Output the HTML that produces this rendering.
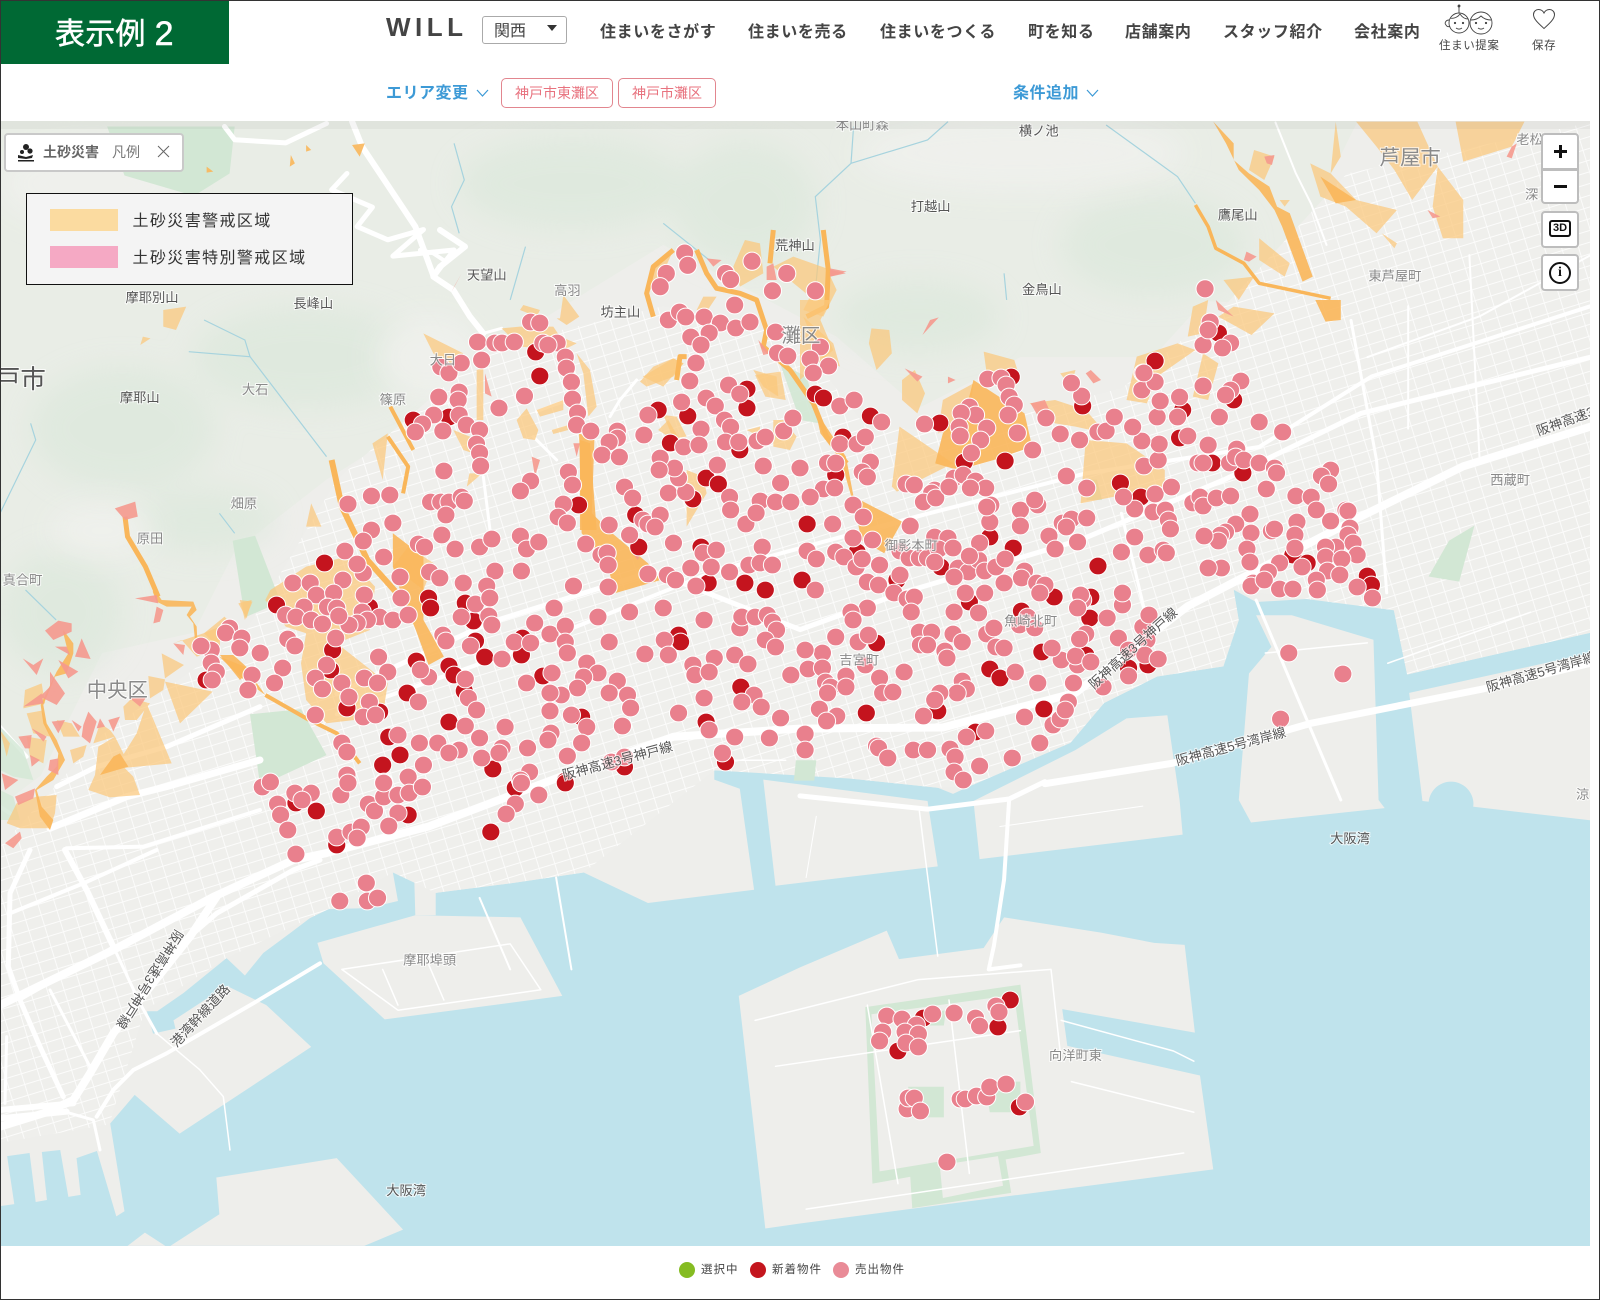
<!DOCTYPE html>
<html lang="ja"><head><meta charset="utf-8"><title>表示例 2</title>
<style>
html,body{margin:0;padding:0;background:#fff}
#w{position:relative;width:1600px;height:1300px;overflow:hidden;background:#fff;font-family:"Liberation Sans","Noto Sans CJK JP",sans-serif}
#w>*{position:absolute}
svg{left:0;top:0}
.nv{top:20.5px;font-size:16px;font-weight:700;color:#444;letter-spacing:.62px;line-height:24px;white-space:nowrap}
.bl{top:81.5px;font-size:16px;font-weight:700;color:#3d9ad6;letter-spacing:.5px;line-height:24px;white-space:nowrap}
.pl{top:78px;height:28px;border:1px solid #e2868f;border-radius:5px;font-size:14px;color:#e8737f;line-height:29px;text-align:center;white-space:nowrap;box-sizing:content-box}
.ctl{background:#fff;border:2px solid #bdbdbd;border-radius:4px;box-sizing:border-box;left:1541px;width:38px}
.sm{font-size:11.500px;color:#444;letter-spacing:.6px;white-space:nowrap;line-height:14px}
.lg{font-size:11.500px;color:#444;letter-spacing:1px;top:1263px;line-height:14px;white-space:nowrap}
.dt{width:16px;height:16px;border-radius:50%;top:1262px}
.h{fill:#fbc77c;opacity:.72}.o{fill:#f9b65a;opacity:.9}.k{fill:#f5998e;opacity:.9}
.ln{fill:none;stroke:#f9b65a;vector-effect:non-scaling-stroke;stroke-linejoin:round}
.rv{fill:none;stroke:#a6d3de;stroke-width:1.2;vector-effect:non-scaling-stroke}
.g{fill:#d2e7d4}
.lnd{fill:#eeeeeb}
.rd{fill:none;stroke:#fff;stroke-linejoin:round;stroke-linecap:round}
.rd path{vector-effect:non-scaling-stroke}
.p circle{r:8.9px;fill:#e9808d;stroke:#fff;stroke-width:1}
.r circle{r:8.9px;fill:#c4141e;stroke:#fff;stroke-width:1}
text{font-family:"Liberation Sans","Noto Sans CJK JP",sans-serif;text-anchor:middle;paint-order:stroke;stroke:#fff;stroke-width:2px;stroke-opacity:.75;font-size:13px;fill:#8a8a8a}
text.d{fill:#555}
</style></head><body>
<div id="w">
<svg width="1600" height="1300" viewBox="0 0 1600 1300">
<defs>
<clipPath id="cp"><rect x="1" y="121" width="1589" height="1125"/></clipPath>
<pattern id="st" width="16" height="11" patternUnits="userSpaceOnUse" patternTransform="rotate(-17)"><path d="M0 .5H16M.5 0V11" stroke="#fff" stroke-width=".9" fill="none" opacity=".8"/></pattern>
<filter id="bl" x="-30%" y="-30%" width="160%" height="160%"><feGaussianBlur stdDeviation="14"/></filter>
</defs>
<g clip-path="url(#cp)">
<rect x="0" y="121" width="1600" height="1130" fill="#bfe3ec"/>
<g transform="scale(1.0204)">
<path class="lnd" d="M0 1182L14 1180 7 1133 29 1130 35 1178 46 1176 41 1129 59 1127 67 1173 79 1171 75 1135 95 1128 114 1192 122 1187 108 1101 132 1073 176 1111 305 1026 261 985 222 966 170 1000 172 1008 150 1013 144 991 154 991 180 973 222 939 240 956 258 934 285 914 310 895 322 891 360 890 390 883 385 855 400 852 406 862 407 897 427 897 427 875 505 865 572 855 635 885 739 872 725 773 700 764 700 755 784 754 834 763 919 772 934 778 949 771 1049 728 1082 689 1134 663 1199 653 1201 621 1214 608 1209 578 1231 590 1314 585 1334 593 1366 598 1379 661 1559 620 1559 100 0 100Z"/>
<path class="lnd" d="M311 924L407 897 510 899 551 976 377 999 317 944ZM212 1154L330 1135 395 1205 357 1221 167 1221 215 1190ZM125 1221L142 1208 162 1221ZM748 764L909 785 919 849 760 868ZM954 785L1054 735 1104 704 1144 701 1156 784 1159 818 960 842ZM1224 660L1246 634 1231 603 1266 603 1346 627 1351 784 1357 792 1226 806 1214 784ZM1381 679L1559 640 1559 804 1439 790 1394 785Z"/>
<path class="lnd" d="M724 976L784 948 869 912 881 940 964 929 984 899 1079 914 1131 924 1161 926 1171 1012 1041 989 1046 1025 1176 1054 1189 1146 784 1199 750 1204Z"/>
<circle cx="1422" cy="788" r="22" fill="#bfe3ec"/>
<!-- hills -->
<path fill="#e9ede6" d="M0 100H1340L1300 180 1290 300 1180 295 1130 350 1000 350 900 400 820 330 650 240 520 320 400 420 320 470 230 540 190 620 100 640 40 760 0 790Z"/>
<g filter="url(#bl)" fill="#dce8dc" opacity=".7">
<ellipse cx="120" cy="420" rx="90" ry="60"/><ellipse cx="300" cy="350" rx="110" ry="50"/><ellipse cx="60" cy="600" rx="60" ry="60"/><ellipse cx="560" cy="180" rx="110" ry="45"/><ellipse cx="730" cy="200" rx="70" ry="60"/><ellipse cx="900" cy="310" rx="80" ry="35"/><ellipse cx="1130" cy="240" rx="90" ry="50"/><ellipse cx="200" cy="510" rx="70" ry="30"/>
</g>
<g filter="url(#bl)" fill="#f0f1ed" opacity=".9">
<ellipse cx="90" cy="180" rx="90" ry="40"/><ellipse cx="1000" cy="150" rx="160" ry="35"/><ellipse cx="420" cy="350" rx="50" ry="40"/><ellipse cx="100" cy="520" rx="50" ry="25"/>
</g>
<!-- urban street texture -->
<path fill="#efefec" d="M0 830L100 720 240 620 330 470 480 340 650 300 780 330 850 420 950 420 1100 380 1200 300 1320 170 1559 120V620L1379 661 1366 598 1209 578 1214 608 1199 653 1134 663 1082 689 1049 728 949 771 919 772 834 763 700 755 572 855 505 865 427 875 385 855 322 891 222 939 142 990 107 1102 0 1120Z"/>
<path fill="url(#st)" d="M0 830L100 720 240 620 330 470 480 340 650 300 780 330 850 420 950 420 1100 380 1200 300 1320 170 1559 120V620L1379 661 1366 598 1209 578 1214 608 1199 653 1134 663 1082 689 1049 728 949 771 919 772 834 763 700 755 572 855 505 865 427 875 385 855 322 891 222 939 142 990 107 1102 0 1120Z"/>
<!-- parks -->
<path class="g" d="M228 530L250 525 275 590 240 605ZM245 700L295 695 320 740 255 770ZM105 124H230L225 170 190 192 122 172ZM1062 470H1075L1080 490 1065 490ZM1420 530L1445 515 1430 570 1400 565ZM780 745H800L798 765H778ZM848 987L1000 965 1020 1130 855 1160ZM891 1136L984 1127 991 1169 894 1184Z"/>
<path fill="#eeeeeb" d="M854 994L994 975 1013 1123 862 1148ZM921 1142L978 1133 983 1162 924 1174Z"/>
<path class="g" d="M895 1005H925L927 990 896 995ZM890 1065H925V1095H893ZM965 1060H1000V1090H970Z"/>
<!-- roads -->
<g class="rd">
<path stroke-width="8" d="M0 985L111 931 209 879 287 843 320 836 420 810 550 761 660 722 784 714 924 713 1054 679 1164 594 1334 506 1434 457 1559 418"/>
<path stroke-width="7" d="M1024 768L1149 748 1284 709 1454 675 1559 650"/>
<path stroke-width="5" d="M784 780L909 793 989 783 1024 766"/>
<path stroke-width="4" d="M989 783L984 862 974 927 969 950 1000 946"/>
<path stroke-width="1.5" d="M901 795L919 937"/>
<path stroke-width="5" d="M330 680L480 610 640 560 784 617 884 581 1059 529 1200 470 1334 405 1559 350"/>
<path stroke-width="4" d="M330 700L500 640 700 560 899 506 1064 464 1234 438 1344 369 1559 300"/>
<path stroke-width="3" d="M1324 314L1349 451 1359 581M1099 503L1124 608M1231 588L1314 784"/>
<path stroke-width="2" d="M470 880L500 950M545 860L560 950"/>
<path stroke-width="1.5" d="M335 950L500 925 530 970 390 990ZM375 950L390 985M420 945L435 980M740 1000L900 960 1030 950 1040 1040M760 1045L1000 1010M850 985L880 1160M930 980L950 1150M1040 1000L1150 1030 1170 1040M1050 1060L1170 1090M790 1185L1160 1130M720 745L770 745M1240 640L1340 630M1360 650L1500 600"/>
<path stroke-width="1" d="M800 800L790 860M980 810L1120 790M1240 720L1330 700"/>
<path stroke-width="5" d="M220 124L230 137 280 140 320 121M340 170L325 186 365 203 350 222 380 235 415 225 385 251 445 245 425 271"/>
<path stroke-width="6" d="M345 119L355 144 407 222 425 271"/>
<path stroke-width="2" d="M1250 120L1270 170 1285 200 1300 240M1340 350L1450 310 1559 250M1380 300V420M1440 250L1450 450"/>
</g>
</g>
<!-- precise west road network (zoom-3 coordinates) -->
<g transform="translate(0,850) scale(.3333)" class="rd">
<path stroke-width="6" d="M195 0L260 120 340 290"/>
<path stroke-width="3" d="M340 290L420 460 470 550"/>
<path stroke-width="1.5" d="M470 550L600 660 670 740 690 900"/>
<path stroke-width="5" d="M90 0L30 130 25 350 60 450 120 590 190 740"/>
<path stroke-width="4" d="M30 190L250 100 470 0"/>
<path stroke-width="8" d="M0 830L130 790 220 750 270 670 340 550 570 260 650 140"/>
<path stroke-width="6" d="M0 780L220 760M0 805L200 785"/>
<path stroke-width="5" d="M580 250L650 190 880 60 960 30"/>
<path stroke-width="4" d="M290 800L340 720 400 660 500 610 760 460 960 340"/>
<path stroke-width="3" d="M210 790L280 810 300 900M60 450L340 290M150 420L270 650M20 560L15 760"/>
</g>
<g transform="translate(0,590) scale(.3333)" class="rd">
<path stroke-width="7" d="M150 715L380 620 500 590 780 510"/>
<path stroke-width="5" d="M170 590L290 530 500 470 780 350"/>
<path stroke-width="4" d="M0 410L80 500M0 650L30 670M200 775L430 770 780 660"/>
</g>
<!-- rivers -->
<g transform="translate(800,0) scale(.5102,.3333)"><path class="rv" d="M105 380L100 490 30 590 40 720 28 900M100 490L250 420 290 365M600 375L740 530 775 610M400 820L405 900"/></g>
<g transform="translate(0,0) scale(.5102,.3333)"><path class="rv" d="M890 430L910 540 885 620 900 700M1300 670L1390 780M1030 740L1000 900"/></g>
<g transform="translate(0,300) scale(.5102,.3333)"><path class="rv" d="M400 60L480 120 490 170 370 155M490 170L640 470M60 370L70 420 0 640M430 640L460 700M50 870L110 960"/></g>
<!-- hazard zones Z4 -->
<g transform="translate(0,300) scale(.5102,.3333)">
<path class="h" d="M530 870L600 800 680 770 735 860 725 990 660 1030 760 1150 750 1250 640 1270 600 1200 590 1090 600 1000 560 980 520 900ZM1260 230L1320 175 1340 190 1300 260ZM320 30L365 20 345 90 320 80ZM730 430L760 400 750 540ZM610 610L630 680 600 680ZM800 740L850 790 830 870 770 800ZM470 900L495 905 480 960ZM400 1000L440 950 470 1000 420 1030ZM1480 225L1530 215 1540 300 1500 290ZM1310 360L1340 440 1290 390ZM920 520L945 520 915 560ZM280 110L295 115 275 135Z"/>
<path class="o" d="M1135 400L1165 420 1160 640 1200 700 1270 790 1295 840 1205 880 1190 790 1140 700ZM430 1070L480 1100 520 1185 470 1130ZM770 700L830 770 830 960 870 1070 840 1095 815 990 790 900 770 800Z"/>
<path class="ln" stroke-width="6" d="M650 480L670 620 720 780 790 900"/>
<path class="ln" stroke-width="5" d="M245 650L250 710 285 800 310 890"/>
<path class="ln" stroke-width="4" d="M520 1185L600 1255 660 1300 705 1390M760 410L800 500 790 580M765 320L810 450"/>
<path class="k" d="M225 625L265 605 270 650 245 660ZM1240 760L1265 730 1250 780Z"/>
</g>
<!-- hazard zones west (zoom-1 coords) -->
<g transform="translate(0,590) scale(.3333)">
<path class="g" d="M0 410L70 480 100 570 40 560 0 540ZM0 600L40 620 60 690 0 690Z" opacity=".8"/>
<path class="h" d="M485 190L552 225 495 265ZM445 258L495 268 490 300 450 325ZM495 275L638 305 540 400ZM370 350L395 325 450 340 410 390 375 390ZM440 340L515 520 360 535 360 510 410 430ZM345 440L390 530 285 555 295 470ZM285 555L370 530 400 560 420 615 330 622 265 600ZM210 480L260 465 250 500 220 520ZM80 370L125 362 150 440 100 430ZM50 640L110 620 170 615 165 670 150 715 60 715 20 700ZM75 300L125 280 135 340 70 355ZM610 130L660 110 660 180 590 200 545 150 520 160ZM715 40L755 30 740 85ZM0 420L30 460 20 500ZM80 440L140 450 130 520 90 500ZM300 400L330 420 345 440 280 460ZM170 390L215 400 240 440 190 440Z"/>
<path class="o" d="M465 0L485 30 580 35 590 60 570 80 590 110 592 150 585 150 580 100 560 75 575 50 500 50 470 35 458 5ZM190 120L220 160 220 190 200 250 165 260 130 345 140 400 170 450 195 510 160 570 110 600 125 650 160 690 150 720 120 680 105 600 140 560 170 530 175 490 130 400 122 345 170 245 205 190 190 130ZM660 195L700 195 750 240 720 270ZM360 490L385 530 300 555 340 500Z"/>
<path class="k" d="M135 122L175 92 215 100 215 125 160 150ZM165 170L200 170 210 195ZM245 145L272 207 225 200ZM68 205L100 225 130 205 110 255ZM175 210L235 245 205 265ZM150 245L195 310 170 345 120 320 150 290ZM70 350L125 310 130 340ZM405 25L470 15 475 40ZM470 50L490 60 480 95 460 100ZM520 160L555 165 550 195ZM390 325L440 320 420 350ZM265 365L290 395 270 460 245 440 250 405ZM300 385L315 410 290 415ZM325 390L360 380 340 425ZM215 390L245 410 235 425ZM155 395L195 390 175 430ZM55 440L95 435 90 475 75 475ZM95 415L140 440 130 455ZM150 510L175 505 175 555 145 540ZM5 550L55 570 15 600ZM45 620L105 595 100 625 55 645ZM15 760L60 725 65 745 40 775ZM90 495L120 510 95 530Z"/>
</g>
<!-- hazard zones centre-north (zoom-2 coords) -->
<g transform="translate(420,230) scale(.3333)">
<g class="rd"><path stroke-width="6" d="M60 0L135 50 60 110 40 140 100 180 150 260 190 310"/><path stroke-width="4" d="M0 60L40 70 70 90"/><path stroke-width="3" d="M190 310L245 295M340 620L410 690M190 740L210 900M350 545L440 510M650 450L600 510 570 560"/></g>
<path class="g" d="M1080 400L1160 440 1200 580 1140 570Z" opacity=".9"/>
<path class="h" d="M300 240L310 225 360 240 350 260ZM420 265L430 195 478 260 440 285 410 265ZM245 295L300 290 400 290 420 320 470 340 430 360 300 350ZM10 310L130 370 90 410 40 370ZM170 420L190 415 190 570 170 570ZM350 540L430 510 430 540 360 560ZM290 570L320 535 355 600 345 630 310 625ZM395 600L445 585 445 600 400 612ZM470 370L510 420 530 530 505 560 490 430ZM975 30L1020 40 1030 130 960 170 940 110ZM1120 80L1220 115 1250 180 1210 260 1150 240 1170 200 1060 110ZM700 410L760 385 790 400 760 440 680 470 660 455ZM730 555L770 560 800 620 760 625ZM1000 420L1070 440 1075 500 1030 470ZM1060 570L1090 570 1130 620 1110 660 1060 650ZM800 720L850 740 860 790 800 890ZM1150 260L1240 340 1260 410 1200 380ZM850 200L890 200 860 245 830 240ZM980 600L1020 590 1020 620ZM700 110L760 60 720 150 690 180ZM100 600L150 620 190 680 130 660Z"/>
<path class="o" d="M480 630L510 640 530 900 480 900Z"/>
<path class="ln" stroke-width="5" d="M700 260L680 190 700 110 760 60M830 60L860 130 890 175 960 190 1010 210 1040 300 1030 350 1110 420 1180 520 1220 620 1280 700M1210 0L1225 120 1220 230 1160 260M1060 0L1050 100M770 450L780 380 800 380"/>
<path class="k" d="M95 185L125 130 105 165ZM860 85L905 90 880 110ZM1230 115L1280 125 1230 140ZM1040 110L1060 100 1070 150 1040 150ZM1015 330L1050 370 1030 375ZM195 430L215 500 195 490ZM460 640L480 640 470 680ZM335 680L360 690 345 740Z"/>
</g>
<!-- hazard zones Z5 -->
<g transform="translate(800,300) scale(.5102,.3333)">
<path class="h" d="M0 0H60L40 60 65 150 0 240ZM195 380L300 490 190 575 180 560ZM560 420L640 430 715 510 715 560 550 610ZM850 20L930 40 885 105 820 50ZM660 170L740 130 775 150 700 230 680 310 640 300ZM140 85L175 90 180 160 150 210 135 130ZM200 240L225 210 245 280 230 340 200 300ZM360 155L420 180 430 230 365 210ZM450 310L500 300 560 330 600 400 540 380 500 370ZM510 220L540 210 530 260ZM280 300L340 250 330 380 270 400ZM770 20L800 0 790 100 760 110ZM790 160L820 190 800 300 770 290Z"/>
<path class="o" d="M340 240L440 340 455 440 380 480 310 510 265 490 280 400 330 300ZM1010 0H1060V60L1030 65ZM40 400L30 330 90 470 105 590 200 665 165 760 120 720 110 640 80 480Z"/>
<path class="k" d="M255 60L272 52 240 105ZM570 210L590 240 575 250 560 220ZM452 310L480 300 490 335 465 345ZM815 0L850 50 820 30ZM205 205L240 230 230 245ZM290 230L305 240 290 250Z"/>
</g>
<!-- hazard zones Z2 -->
<g transform="translate(800,0) scale(.5102,.3333)">
<path class="h" d="M1050 365L1060 470 1040 520 1090 600 1070 620 1020 590 1000 490 1040 520ZM1090 365H1210L1250 500 1300 600 1300 715 1260 715 1240 620 1250 500 1200 600 1165 510 1130 440ZM1285 365H1420L1395 440 1300 485ZM1090 600L1170 630 1130 700 1070 620ZM900 715L960 790 950 830 900 780ZM890 450L930 470 910 540 880 510ZM830 840L890 830 860 900ZM1140 700L1170 730 1165 745ZM940 600L960 600 950 620Z"/>
<path class="o" d="M810 365L850 430 850 480 880 520 920 560 935 620 960 640 1005 830 985 845 945 680 930 630 900 570 860 510 835 430ZM1020 530L1090 600 1050 610Z"/>
<path class="ln" stroke-width="3.5" d="M775 615L800 680 815 745 870 790 900 850 1040 895"/>
<path class="k" d="M910 470L930 465 925 495 915 490ZM875 755L895 770 880 785 870 780ZM1230 630L1255 650 1240 655ZM1395 440L1405 430 1395 475 1385 470ZM60 810L90 820 60 830Z"/>
</g>
<g transform="translate(0,0) scale(.5102,.3333)">
<path class="o" d="M690 435L715 430 705 470ZM570 465L578 490 568 500ZM615 470L625 500ZM405 500L418 515 405 518ZM600 435L610 450 600 455Z"/>
</g>
<!-- dots -->
<g transform="translate(0,300) scale(1.0204,1)" class="r"><circle cx=529 cy=76 /><circle cx=525 cy=52 /><circle cx=405 cy=120 /><circle cx=440 cy=117 /><circle cx=645 cy=110 /><circle cx=674 cy=116 /><circle cx=732 cy=108 /><circle cx=732 cy=89 /><circle cx=657 cy=143 /><circle cx=725 cy=150 /><circle cx=692 cy=178 /><circle cx=704 cy=184 /><circle cx=679 cy=199 /><circle cx=567 cy=205 /><circle cx=623 cy=215 /><circle cx=626 cy=247 /><circle cx=687 cy=247 /><circle cx=318 cy=263 /><circle cx=694 cy=283 /><circle cx=730 cy=283 /><circle cx=750 cy=290 /><circle cx=271 cy=305 /><circle cx=420 cy=298 /><circle cx=422 cy=308 /><circle cx=456 cy=303 /><circle cx=464 cy=321 /><circle cx=362 cy=307 /><circle cx=665 cy=335 /><circle cx=667 cy=342 /><circle cx=466 cy=341 /><circle cx=512 cy=338 /><circle cx=511 cy=355 /><circle cx=475 cy=357 /><circle cx=326 cy=350 /><circle cx=408 cy=361 /><circle cx=440 cy=366 /><circle cx=445 cy=375 /><circle cx=324 cy=370 /><circle cx=202 cy=380 /><circle cx=532 cy=376 /><circle cx=399 cy=393 /><circle cx=455 cy=391 /><circle cx=340 cy=408 /><circle cx=372 cy=412 /><circle cx=440 cy=422 /><circle cx=726 cy=387 /><circle cx=692 cy=422 /><circle cx=381 cy=437 /><circle cx=392 cy=455 /><circle cx=375 cy=465 /><circle cx=483 cy=469 /><circle cx=570 cy=417 /><circle cx=711 cy=462 /><circle cx=554 cy=481 /><circle cx=505 cy=488 /><circle cx=612 cy=467 /></g>
<g transform="translate(800,300) scale(1.0204,1)" class="r"><circle cx=15 cy=94 /><circle cx=23 cy=98 /><circle cx=69 cy=116 /><circle cx=137 cy=123 /><circle cx=207 cy=77 /><circle cx=348 cy=61 /><circle cx=336 cy=73 /><circle cx=277 cy=106 /><circle cx=410 cy=33 /><circle cx=425 cy=100 /><circle cx=375 cy=110 /><circle cx=372 cy=138 /><circle cx=42 cy=137 /><circle cx=161 cy=162 /><circle cx=201 cy=161 /><circle cx=314 cy=183 /><circle cx=334 cy=197 /><circle cx=404 cy=163 /><circle cx=434 cy=173 /><circle cx=35 cy=175 /><circle cx=7 cy=224 /><circle cx=186 cy=237 /><circle cx=209 cy=248 /><circle cx=56 cy=252 /><circle cx=2 cy=280 /><circle cx=95 cy=280 /><circle cx=138 cy=267 /><circle cx=292 cy=266 /><circle cx=483 cy=255 /><circle cx=497 cy=263 /><circle cx=556 cy=276 /><circle cx=560 cy=285 /><circle cx=249 cy=297 /><circle cx=285 cy=297 /><circle cx=166 cy=302 /><circle cx=217 cy=311 /><circle cx=284 cy=318 /><circle cx=75 cy=343 /><circle cx=237 cy=352 /><circle cx=280 cy=355 /><circle cx=186 cy=369 /><circle cx=196 cy=378 /><circle cx=322 cy=368 /><circle cx=341 cy=365 /><circle cx=65 cy=413 /><circle cx=135 cy=411 /><circle cx=239 cy=409 /><circle cx=172 cy=432 /></g>
<g transform="translate(800,780) scale(1.0204,1)" class="r"><circle cx=206 cy=220 /><circle cx=121 cy=238 /><circle cx=194 cy=247 /><circle cx=96 cy=271 /><circle cx=215 cy=327 /></g>
<g transform="translate(0,780) scale(1.0204,1)" class="r"><circle cx=310 cy=31 /><circle cx=400 cy=35 /><circle cx=330 cy=65 /><circle cx=481 cy=52 /><circle cx=505 cy=8 /><circle cx=554 cy=3 /><circle cx=290 cy=23 /></g>
<g transform="scale(1.0204)" class="p"><circle cx=671 cy=248 /><circle cx=674 cy=260 /><circle cx=653 cy=268 /><circle cx=647 cy=281 /><circle cx=711 cy=268 /><circle cx=716 cy=274 /><circle cx=737 cy=256 /><circle cx=771 cy=268 /><circle cx=757 cy=285 /><circle cx=799 cy=285 /><circle cx=1181 cy=283 /></g>
<g transform="translate(0,300) scale(1.0204,1)" class="p"><circle cx=468 cy=42 /><circle cx=485 cy=43 /><circle cx=492 cy=43 /><circle cx=504 cy=42 /><circle cx=520 cy=22 /><circle cx=529 cy=23 /><circle cx=532 cy=43 /><circle cx=546 cy=43 /><circle cx=537 cy=45 /><circle cx=554 cy=57 /><circle cx=555 cy=68 /><circle cx=560 cy=82 /><circle cx=561 cy=99 /><circle cx=566 cy=113 /><circle cx=565 cy=125 /><circle cx=579 cy=131 /><circle cx=432 cy=67 /><circle cx=440 cy=73 /><circle cx=452 cy=63 /><circle cx=472 cy=60 /><circle cx=430 cy=97 /><circle cx=450 cy=92 /><circle cx=449 cy=100 /><circle cx=425 cy=115 /><circle cx=414 cy=124 /><circle cx=407 cy=132 /><circle cx=434 cy=131 /><circle cx=450 cy=115 /><circle cx=457 cy=125 /><circle cx=470 cy=130 /><circle cx=467 cy=144 /><circle cx=470 cy=153 /><circle cx=471 cy=166 /><circle cx=489 cy=108 /><circle cx=514 cy=96 /><circle cx=435 cy=171 /><circle cx=557 cy=172 /><circle cx=561 cy=185 /><circle cx=520 cy=181 /><circle cx=510 cy=191 /><circle cx=422 cy=202 /><circle cx=432 cy=202 /><circle cx=440 cy=202 /><circle cx=452 cy=197 /><circle cx=455 cy=201 /><circle cx=437 cy=215 /><circle cx=341 cy=204 /><circle cx=364 cy=196 /><circle cx=382 cy=195 /><circle cx=385 cy=223 /><circle cx=364 cy=230 /><circle cx=356 cy=241 /><circle cx=338 cy=251 /><circle cx=376 cy=257 /><circle cx=410 cy=244 /><circle cx=416 cy=247 /><circle cx=433 cy=235 /><circle cx=446 cy=249 /><circle cx=470 cy=247 /><circle cx=482 cy=239 /><circle cx=510 cy=236 /><circle cx=516 cy=249 /><circle cx=528 cy=242 /><circle cx=552 cy=204 /><circle cx=547 cy=217 /><circle cx=556 cy=223 /><circle cx=597 cy=225 /><circle cx=574 cy=244 /><circle cx=589 cy=255 /><circle cx=595 cy=253 /><circle cx=596 cy=265 /><circle cx=617 cy=235 /><circle cx=630 cy=220 /><circle cx=635 cy=224 /><circle cx=647 cy=215 /><circle cx=642 cy=227 /><circle cx=612 cy=187 /><circle cx=620 cy=198 /><circle cx=655 cy=193 /><circle cx=672 cy=192 /><circle cx=665 cy=178 /><circle cx=661 cy=168 /><circle cx=647 cy=158 /><circle cx=646 cy=170 /><circle cx=703 cy=165 /><circle cx=748 cy=166 /><circle cx=765 cy=183 /><circle cx=715 cy=197 /><circle cx=745 cy=201 /><circle cx=760 cy=202 /><circle cx=775 cy=202 /><circle cx=716 cy=210 /><circle cx=731 cy=224 /><circle cx=741 cy=213 /><circle cx=660 cy=243 /><circle cx=689 cy=253 /><circle cx=702 cy=250 /><circle cx=747 cy=247 /><circle cx=677 cy=268 /><circle cx=697 cy=267 /><circle cx=715 cy=272 /><circle cx=734 cy=265 /><circle cx=745 cy=263 /><circle cx=757 cy=265 /><circle cx=682 cy=286 /><circle cx=654 cy=275 /><circle cx=662 cy=280 /><circle cx=635 cy=274 /><circle cx=596 cy=287 /><circle cx=562 cy=286 /><circle cx=511 cy=271 /><circle cx=485 cy=271 /><circle cx=454 cy=283 /><circle cx=477 cy=286 /><circle cx=392 cy=277 /><circle cx=421 cy=272 /><circle cx=431 cy=278 /><circle cx=356 cy=273 /><circle cx=350 cy=264 /><circle cx=336 cy=280 /><circle cx=357 cy=295 /><circle cx=393 cy=298 /><circle cx=372 cy=317 /><circle cx=385 cy=320 /><circle cx=400 cy=315 /><circle cx=355 cy=312 /><circle cx=360 cy=320 /><circle cx=350 cy=323 /><circle cx=342 cy=325 /><circle cx=287 cy=283 /><circle cx=304 cy=283 /><circle cx=310 cy=295 /><circle cx=327 cy=293 /><circle cx=298 cy=307 /><circle cx=321 cy=307 /><circle cx=330 cy=308 /><circle cx=280 cy=315 /><circle cx=290 cy=317 /><circle cx=305 cy=320 /><circle cx=316 cy=324 /><circle cx=332 cy=316 /><circle cx=225 cy=328 /><circle cx=221 cy=333 /><circle cx=237 cy=338 /><circle cx=235 cy=348 /><circle cx=255 cy=353 /><circle cx=207 cy=350 /><circle cx=197 cy=346 /><circle cx=207 cy=363 /><circle cx=212 cy=372 /><circle cx=208 cy=380 /><circle cx=277 cy=368 /><circle cx=282 cy=339 /><circle cx=289 cy=346 /><circle cx=329 cy=338 /><circle cx=371 cy=357 /><circle cx=380 cy=372 /><circle cx=320 cy=365 /><circle cx=309 cy=378 /><circle cx=316 cy=389 /><circle cx=335 cy=383 /><circle cx=342 cy=397 /><circle cx=357 cy=378 /><circle cx=370 cy=383 /><circle cx=362 cy=402 /><circle cx=356 cy=417 /><circle cx=368 cy=415 /><circle cx=309 cy=415 /><circle cx=269 cy=383 /><circle cx=247 cy=375 /><circle cx=243 cy=390 /><circle cx=434 cy=335 /><circle cx=437 cy=341 /><circle cx=461 cy=346 /><circle cx=492 cy=359 /><circle cx=504 cy=342 /><circle cx=520 cy=343 /><circle cx=539 cy=334 /><circle cx=554 cy=326 /><circle cx=554 cy=342 /><circle cx=556 cy=353 /><circle cx=543 cy=308 /><circle cx=524 cy=323 /><circle cx=452 cy=317 /><circle cx=479 cy=316 /><circle cx=482 cy=325 /><circle cx=466 cy=304 /><circle cx=480 cy=298 /><circle cx=586 cy=317 /><circle cx=617 cy=312 /><circle cx=650 cy=308 /><circle cx=690 cy=320 /><circle cx=597 cy=342 /><circle cx=651 cy=340 /><circle cx=632 cy=354 /><circle cx=655 cy=355 /><circle cx=575 cy=363 /><circle cx=586 cy=373 /><circle cx=572 cy=377 /><circle cx=566 cy=388 /><circle cx=541 cy=373 /><circle cx=516 cy=383 /><circle cx=550 cy=395 /><circle cx=539 cy=393 /><circle cx=605 cy=381 /><circle cx=597 cy=393 /><circle cx=615 cy=395 /><circle cx=618 cy=408 /><circle cx=539 cy=411 /><circle cx=560 cy=415 /><circle cx=575 cy=427 /><circle cx=610 cy=426 /><circle cx=665 cy=413 /><circle cx=690 cy=398 /><circle cx=720 cy=355 /><circle cx=733 cy=364 /><circle cx=700 cy=358 /><circle cx=679 cy=365 /><circle cx=681 cy=375 /><circle cx=695 cy=372 /><circle cx=725 cy=328 /><circle cx=727 cy=317 /><circle cx=740 cy=317 /><circle cx=752 cy=315 /><circle cx=757 cy=322 /><circle cx=761 cy=330 /><circle cx=750 cy=340 /><circle cx=760 cy=347 /><circle cx=775 cy=375 /><circle cx=739 cy=395 /><circle cx=727 cy=402 /><circle cx=746 cy=407 /><circle cx=765 cy=418 /><circle cx=695 cy=430 /><circle cx=720 cy=437 /><circle cx=754 cy=438 /><circle cx=708 cy=453 /><circle cx=410 cy=402 /><circle cx=420 cy=377 /><circle cx=412 cy=370 /><circle cx=456 cy=379 /><circle cx=459 cy=398 /><circle cx=467 cy=410 /><circle cx=456 cy=426 /><circle cx=470 cy=438 /><circle cx=495 cy=427 /><circle cx=492 cy=448 /><circle cx=517 cy=448 /><circle cx=472 cy=458 /><circle cx=489 cy=453 /><circle cx=540 cy=433 /><circle cx=537 cy=440 /><circle cx=570 cy=443 /><circle cx=556 cy=456 /><circle cx=599 cy=462 /><circle cx=612 cy=457 /><circle cx=519 cy=472 /><circle cx=510 cy=480 /><circle cx=415 cy=465 /><circle cx=400 cy=477 /><circle cx=411 cy=443 /><circle cx=429 cy=443 /><circle cx=450 cy=450 /><circle cx=440 cy=453 /><circle cx=390 cy=435 /><circle cx=335 cy=443 /><circle cx=340 cy=452 /><circle cx=340 cy=475 /><circle cx=376 cy=482 /><circle cx=655 cy=20 /><circle cx=666 cy=12 /><circle cx=672 cy=17 /><circle cx=690 cy=17 /><circle cx=706 cy=23 /><circle cx=721 cy=28 /><circle cx=735 cy=22 /><circle cx=720 cy=5 /><circle cx=760 cy=32 /><circle cx=695 cy=33 /><circle cx=677 cy=37 /><circle cx=687 cy=45 /><circle cx=682 cy=63 /><circle cx=676 cy=81 /><circle cx=714 cy=85 /><circle cx=725 cy=94 /><circle cx=692 cy=98 /><circle cx=701 cy=106 /><circle cx=710 cy=120 /><circle cx=716 cy=127 /><circle cx=668 cy=102 /><circle cx=635 cy=115 /><circle cx=687 cy=129 /><circle cx=631 cy=135 /><circle cx=670 cy=147 /><circle cx=685 cy=145 /><circle cx=711 cy=142 /><circle cx=724 cy=142 /><circle cx=742 cy=141 /><circle cx=750 cy=137 /><circle cx=768 cy=131 /><circle cx=777 cy=118 /><circle cx=762 cy=53 /><circle cx=772 cy=56 /><circle cx=605 cy=131 /><circle cx=605 cy=138 /><circle cx=597 cy=142 /><circle cx=590 cy=155 /><circle cx=607 cy=157 /></g>
<g transform="translate(800,300) scale(1.0204,1)" class="p"><circle cx=20 cy=47 /><circle cx=10 cy=59 /><circle cx=28 cy=66 /><circle cx=13 cy=73 /><circle cx=39 cy=106 /><circle cx=53 cy=100 /><circle cx=80 cy=122 /><circle cx=122 cy=124 /><circle cx=39 cy=144 /><circle cx=56 cy=144 /><circle cx=64 cy=137 /><circle cx=27 cy=163 /><circle cx=35 cy=163 /><circle cx=69 cy=162 /><circle cx=61 cy=172 /><circle cx=66 cy=177 /><circle cx=0 cy=168 /><circle cx=23 cy=189 /><circle cx=34 cy=188 /><circle cx=10 cy=197 /><circle cx=52 cy=205 /><circle cx=62 cy=217 /><circle cx=32 cy=224 /><circle cx=71 cy=240 /><circle cx=52 cy=238 /><circle cx=108 cy=226 /><circle cx=7 cy=251 /><circle cx=16 cy=259 /><circle cx=35 cy=252 /><circle cx=43 cy=257 /><circle cx=55 cy=267 /><circle cx=61 cy=259 /><circle cx=78 cy=265 /><circle cx=66 cy=282 /><circle cx=77 cy=285 /><circle cx=98 cy=275 /><circle cx=92 cy=293 /><circle cx=105 cy=299 /><circle cx=112 cy=297 /><circle cx=109 cy=312 /><circle cx=66 cy=308 /><circle cx=50 cy=312 /><circle cx=52 cy=320 /><circle cx=15 cy=290 /><circle cx=98 cy=251 /><circle cx=107 cy=258 /><circle cx=117 cy=258 /><circle cx=125 cy=258 /><circle cx=132 cy=237 /><circle cx=145 cy=238 /><circle cx=136 cy=249 /><circle cx=150 cy=248 /><circle cx=132 cy=262 /><circle cx=155 cy=268 /><circle cx=165 cy=272 /><circle cx=151 cy=277 /><circle cx=175 cy=260 /><circle cx=181 cy=271 /><circle cx=192 cy=267 /><circle cx=201 cy=259 /><circle cx=220 cy=271 /><circle cx=217 cy=278 /><circle cx=232 cy=283 /><circle cx=240 cy=285 /><circle cx=235 cy=293 /><circle cx=200 cy=283 /><circle cx=162 cy=293 /><circle cx=181 cy=293 /><circle cx=151 cy=312 /><circle cx=175 cy=313 /><circle cx=223 cy=317 /><circle cx=215 cy=325 /><circle cx=230 cy=328 /><circle cx=183 cy=334 /><circle cx=190 cy=328 /><circle cx=192 cy=347 /><circle cx=200 cy=348 /><circle cx=211 cy=372 /><circle cx=233 cy=383 /><circle cx=159 cy=381 /><circle cx=163 cy=389 /><circle cx=154 cy=393 /><circle cx=137 cy=393 /><circle cx=132 cy=400 /><circle cx=117 cy=332 /><circle cx=129 cy=332 /><circle cx=118 cy=345 /><circle cx=125 cy=345 /><circle cx=142 cy=351 /><circle cx=150 cy=334 /><circle cx=159 cy=342 /><circle cx=144 cy=358 /><circle cx=35 cy=337 /><circle cx=57 cy=342 /><circle cx=67 cy=335 /><circle cx=22 cy=353 /><circle cx=5 cy=350 /><circle cx=64 cy=365 /><circle cx=8 cy=369 /><circle cx=22 cy=368 /><circle cx=25 cy=382 /><circle cx=30 cy=387 /><circle cx=45 cy=376 /><circle cx=45 cy=387 /><circle cx=27 cy=393 /><circle cx=78 cy=378 /><circle cx=102 cy=372 /><circle cx=81 cy=393 /><circle cx=91 cy=392 /><circle cx=19 cy=409 /><circle cx=36 cy=416 /><circle cx=26 cy=421 /><circle cx=121 cy=416 /><circle cx=5 cy=434 /><circle cx=5 cy=450 /><circle cx=75 cy=446 /><circle cx=77 cy=448 /><circle cx=86 cy=458 /><circle cx=111 cy=450 /><circle cx=125 cy=450 /><circle cx=147 cy=449 /><circle cx=152 cy=457 /><circle cx=151 cy=472 /><circle cx=160 cy=480 /><circle cx=163 cy=437 /><circle cx=182 cy=431 /><circle cx=176 cy=466 /><circle cx=208 cy=458 /><circle cx=235 cy=443 /><circle cx=220 cy=417 /><circle cx=248 cy=425 /><circle cx=255 cy=419 /><circle cx=263 cy=402 /><circle cx=260 cy=410 /><circle cx=268 cy=383 /><circle cx=297 cy=387 /><circle cx=272 cy=365 /><circle cx=256 cy=360 /><circle cx=247 cy=348 /><circle cx=270 cy=356 /><circle cx=285 cy=362 /><circle cx=280 cy=334 /><circle cx=274 cy=339 /><circle cx=312 cy=338 /><circle cx=322 cy=350 /><circle cx=340 cy=340 /><circle cx=338 cy=355 /><circle cx=336 cy=327 /><circle cx=342 cy=315 /><circle cx=351 cy=359 /><circle cx=322 cy=376 /><circle cx=301 cy=318 /><circle cx=316 cy=305 /><circle cx=316 cy=293 /><circle cx=277 cy=300 /><circle cx=275 cy=295 /><circle cx=272 cy=308 /><circle cx=216 cy=210 /><circle cx=233 cy=205 /><circle cx=230 cy=200 /><circle cx=216 cy=226 /><circle cx=186 cy=222 /><circle cx=187 cy=205 /><circle cx=183 cy=207 /><circle cx=176 cy=243 /><circle cx=166 cy=256 /><circle cx=244 cy=236 /><circle cx=257 cy=223 /><circle cx=266 cy=219 /><circle cx=281 cy=218 /><circle cx=261 cy=227 /><circle cx=272 cy=242 /><circle cx=250 cy=249 /><circle cx=315 cy=252 /><circle cx=328 cy=237 /><circle cx=341 cy=255 /><circle cx=356 cy=250 /><circle cx=359 cy=253 /><circle cx=328 cy=209 /><circle cx=346 cy=212 /><circle cx=358 cy=210 /><circle cx=361 cy=220 /><circle cx=363 cy=229 /><circle cx=317 cy=197 /><circle cx=348 cy=194 /><circle cx=364 cy=187 /><circle cx=337 cy=166 /><circle cx=351 cy=160 /><circle cx=352 cy=144 /><circle cx=335 cy=141 /><circle cx=326 cy=127 /><circle cx=292 cy=132 /><circle cx=300 cy=131 /><circle cx=274 cy=140 /><circle cx=255 cy=134 /><circle cx=241 cy=118 /><circle cx=308 cy=117 /><circle cx=350 cy=117 /><circle cx=370 cy=117 /><circle cx=353 cy=101 /><circle cx=372 cy=97 /><circle cx=335 cy=90 /><circle cx=348 cy=82 /><circle cx=337 cy=73 /><circle cx=276 cy=96 /><circle cx=266 cy=83 /><circle cx=395 cy=45 /><circle cx=402 cy=22 /><circle cx=400 cy=30 /><circle cx=422 cy=43 /><circle cx=414 cy=48 /><circle cx=395 cy=86 /><circle cx=432 cy=81 /><circle cx=422 cy=90 /><circle cx=417 cy=95 /><circle cx=411 cy=117 /><circle cx=400 cy=145 /><circle cx=380 cy=136 /><circle cx=450 cy=122 /><circle cx=473 cy=132 /><circle cx=428 cy=149 /><circle cx=390 cy=163 /><circle cx=395 cy=163 /><circle cx=421 cy=163 /><circle cx=427 cy=157 /><circle cx=435 cy=160 /><circle cx=450 cy=163 /><circle cx=465 cy=168 /><circle cx=467 cy=173 /><circle cx=457 cy=189 /><circle cx=520 cy=170 /><circle cx=511 cy=176 /><circle cx=518 cy=184 /><circle cx=486 cy=196 /><circle cx=501 cy=197 /><circle cx=506 cy=210 /><circle cx=520 cy=221 /><circle cx=535 cy=210 /><circle cx=537 cy=211 /><circle cx=487 cy=222 /><circle cx=485 cy=235 /><circle cx=462 cy=231 /><circle cx=465 cy=229 /><circle cx=441 cy=214 /><circle cx=427 cy=224 /><circle cx=442 cy=233 /><circle cx=417 cy=232 /><circle cx=412 cy=235 /><circle cx=410 cy=241 /><circle cx=396 cy=236 /><circle cx=385 cy=203 /><circle cx=392 cy=197 /><circle cx=395 cy=206 /><circle cx=408 cy=198 /><circle cx=422 cy=196 /><circle cx=438 cy=249 /><circle cx=441 cy=262 /><circle cx=470 cy=263 /><circle cx=459 cy=272 /><circle cx=492 cy=267 /><circle cx=485 cy=248 /><circle cx=539 cy=228 /><circle cx=537 cy=235 /><circle cx=542 cy=243 /><circle cx=525 cy=247 /><circle cx=515 cy=247 /><circle cx=515 cy=257 /><circle cx=546 cy=255 /><circle cx=531 cy=259 /><circle cx=517 cy=271 /><circle cx=529 cy=275 /><circle cx=506 cy=280 /><circle cx=507 cy=290 /><circle cx=546 cy=287 /><circle cx=561 cy=298 /><circle cx=444 cy=283 /><circle cx=442 cy=286 /><circle cx=455 cy=280 /><circle cx=470 cy=289 /><circle cx=483 cy=289 /><circle cx=413 cy=268 /><circle cx=400 cy=268 /><circle cx=184 cy=79 /><circle cx=197 cy=78 /><circle cx=202 cy=85 /><circle cx=205 cy=97 /><circle cx=210 cy=105 /><circle cx=204 cy=115 /><circle cx=166 cy=107 /><circle cx=172 cy=115 /><circle cx=158 cy=113 /><circle cx=156 cy=127 /><circle cx=157 cy=136 /><circle cx=183 cy=128 /><circle cx=213 cy=133 /><circle cx=177 cy=140 /><circle cx=228 cy=150 /><circle cx=168 cy=153 /><circle cx=151 cy=178 /><circle cx=160 cy=175 /><circle cx=172 cy=181 /><circle cx=182 cy=188 /><circle cx=104 cy=184 /><circle cx=112 cy=185 /><circle cx=132 cy=190 /><circle cx=129 cy=193 /><circle cx=121 cy=202 /><circle cx=133 cy=198 /><circle cx=146 cy=187 /><circle cx=167 cy=188 /><circle cx=261 cy=176 /><circle cx=281 cy=188 /><circle cx=479 cy=353 /><circle cx=532 cy=374 /><circle cx=471 cy=419 /></g>
<g transform="translate(800,780) scale(1.0204,1)" class="p"><circle cx=85 cy=236 /><circle cx=100 cy=239 /><circle cx=130 cy=234 /><circle cx=151 cy=233 /><circle cx=172 cy=238 /><circle cx=176 cy=246 /><circle cx=192 cy=226 /><circle cx=195 cy=232 /><circle cx=114 cy=245 /><circle cx=81 cy=252 /><circle cx=78 cy=261 /><circle cx=103 cy=252 /><circle cx=116 cy=254 /><circle cx=104 cy=263 /><circle cx=116 cy=267 /><circle cx=105 cy=329 /><circle cx=106 cy=318 /><circle cx=112 cy=318 /><circle cx=118 cy=331 /><circle cx=157 cy=319 /><circle cx=162 cy=319 /><circle cx=173 cy=316 /><circle cx=183 cy=317 /><circle cx=186 cy=307 /><circle cx=202 cy=304 /><circle cx=221 cy=322 /><circle cx=144 cy=382 /></g>
<g transform="translate(0,780) scale(1.0204,1)" class="p"><circle cx=257 cy=7 /><circle cx=265 cy=2 /><circle cx=289 cy=13 /><circle cx=305 cy=13 /><circle cx=334 cy=15 /><circle cx=341 cy=3 /><circle cx=272 cy=24 /><circle cx=275 cy=35 /><circle cx=282 cy=50 /><circle cx=290 cy=74 /><circle cx=296 cy=20 /><circle cx=361 cy=24 /><circle cx=367 cy=31 /><circle cx=376 cy=17 /><circle cx=390 cy=15 /><circle cx=401 cy=13 /><circle cx=414 cy=7 /><circle cx=376 cy=3 /><circle cx=390 cy=33 /><circle cx=381 cy=46 /><circle cx=330 cy=57 /><circle cx=344 cy=52 /><circle cx=354 cy=47 /><circle cx=350 cy=58 /><circle cx=528 cy=15 /><circle cx=505 cy=24 /><circle cx=496 cy=34 /><circle cx=511 cy=3 /><circle cx=359 cy=103 /><circle cx=333 cy=121 /><circle cx=360 cy=121 /><circle cx=370 cy=118 /></g>
<!-- labels -->
<g transform="scale(1.0204)">
<text x="845" y="127">本山町森</text><text x="1018" y="133" class="d">横ノ池</text><text x="912" y="207" class="d">打越山</text><text x="1213" y="215" class="d">鷹尾山</text><text x="779" y="245" class="d">荒神山</text><text x="1021" y="288" class="d">金鳥山</text>
<text x="1382" y="161" style="font-size:20px">芦屋市</text><text x="1499" y="141">老松</text><text x="1501" y="195">深</text><text x="1367" y="275">東芦屋町</text><text x="477" y="274" class="d">天望山</text><text x="556" y="289">高羽</text><text x="608" y="310" class="d">坊主山</text><text x="149" y="296" class="d">摩耶別山</text><text x="307" y="302" class="d">長峰山</text>
<text x="785" y="335" style="font-size:19px">灘区</text><text x="434" y="357">大日</text><text x="20" y="380" style="font-size:25px;fill:#555">戸市</text><text x="137" y="394" class="d">摩耶山</text><text x="250" y="386">大石</text><text x="385" y="396">篠原</text><text x="239" y="498">畑原</text><text x="147" y="532">原田</text><text x="22" y="573">真合町</text><text x="115" y="683" style="font-size:20px">中央区</text>
<text x="605" y="750" class="d" transform="rotate(-15 605 745)">阪神高速3号神戸線</text><text x="1206" y="736" class="d" transform="rotate(-15 1206 731)">阪神高速5号湾岸線</text><text x="1510" y="663" class="d" transform="rotate(-16 1510 658)">阪神高速5号湾岸線</text><text x="1540" y="415" class="d" transform="rotate(-20 1540 410)">阪神高速3号</text><text x="1110" y="640" class="d" transform="rotate(-42 1110 635)">阪神高速3号神戸線</text>
<text x="1480" y="475">西蔵町</text><text x="842" y="651">吉宮町</text><text x="1010" y="613">魚崎北町</text><text x="893" y="539">御影本町</text><text x="1323" y="826" class="d">大阪湾</text><text x="398" y="1171" class="d">大阪湾</text><text x="421" y="945">摩耶埠頭</text><text x="1054" y="1039">向洋町東</text><text x="1551" y="783">涼</text>
<text x="196" y="1000" class="d" transform="rotate(-47 196 995)">港湾幹線道路</text><text x="147" y="965" class="d" transform="rotate(122 147 960)">阪神高速3号神戸線</text>
</g>
</g>
<rect x="0" y="121" width="1590" height="8" fill="#777" opacity=".07"/>
</svg>

<div style="left:0;top:0;width:229px;height:64px;background:#006934"></div>
<div style="left:55px;top:12px;color:#fff;font-size:30px;line-height:44px;white-space:nowrap;letter-spacing:.2px;-webkit-text-stroke:.5px #fff">表示例<span style="font-size:34px;margin-left:9px;vertical-align:-1px">2</span></div>
<div style="left:386px;top:12px;font-family:'Liberation Sans',sans-serif;font-size:26px;line-height:30px;font-weight:700;letter-spacing:4.5px;color:#444">WILL</div>
<div style="left:482px;top:16px;width:85px;height:28px;border:1px solid #aaa;border-radius:3px;box-sizing:border-box;font-size:16px;line-height:29px;color:#444;padding-left:11px">関西</div>
<div style="left:547px;top:25px;width:0;height:0;border-left:5px solid transparent;border-right:5px solid transparent;border-top:6px solid #333"></div>
<div class="nv" style="left:600px">住まいをさがす</div>
<div class="nv" style="left:748px">住まいを売る</div>
<div class="nv" style="left:880px">住まいをつくる</div>
<div class="nv" style="left:1028px">町を知る</div>
<div class="nv" style="left:1125px">店舗案内</div>
<div class="nv" style="left:1223px">スタッフ紹介</div>
<div class="nv" style="left:1354px">会社案内</div>
<svg style="left:1443px;top:4px" width="56" height="32" viewBox="0 0 56 32" fill="none" stroke="#444" stroke-width=".9"><circle cx="16" cy="19" r="10"/><circle cx="38" cy="19" r="11"/><path d="M16 9V2"/><circle cx="16" cy="2" r="1" fill="#444"/><path d="M6 16c-3 0-5 3-3 5 1 2 3 2 4 1M7 14c4 1 8-1 10-4 2 3 5 5 8 5M28 16c3 0 7-1 10-4 2 2 5 4 10 4"/><circle cx="12" cy="19" r=".7" fill="#444"/><circle cx="20" cy="19" r=".7" fill="#444"/><circle cx="33" cy="19" r=".7" fill="#444"/><circle cx="43" cy="19" r=".7" fill="#444"/><path d="M13 24c2 1.500 4 1.500 6 0M35 24c2 1.500 4 1.500 6 0"/></svg>
<div class="sm" style="left:1439px;top:39px">住まい提案</div>
<svg style="left:1532px;top:8px" width="24" height="22" viewBox="0 0 24 22" fill="none" stroke="#444" stroke-width="1"><path d="M12 20.500C6 15 1.500 11 1.500 6.500 1.500 3.500 4 1.500 6.500 1.500 9 1.500 11 3 12 5 13 3 15 1.500 17.500 1.500 20 1.500 22.500 3.500 22.500 6.500 22.500 11 18 15 12 20.500Z"/></svg>
<div class="sm" style="left:1532px;top:39px">保存</div>

<div class="bl" style="left:386px">エリア変更</div>
<svg style="left:476px;top:88px" width="13" height="10" viewBox="0 0 13 10" fill="none" stroke="#3d9ad6" stroke-width="1.2"><path d="M1 2l5.500 6 5.500-6"/></svg>
<div class="pl" style="left:501px;width:110px">神戸市東灘区</div>
<div class="pl" style="left:618px;width:96px">神戸市灘区</div>
<div class="bl" style="left:1013px">条件追加</div>
<svg style="left:1086px;top:88px" width="13" height="10" viewBox="0 0 13 10" fill="none" stroke="#3d9ad6" stroke-width="1.2"><path d="M1 2l5.500 6 5.500-6"/></svg>

<!-- layer chip -->
<div style="left:4px;top:133px;width:180px;height:39px;background:#fff;border:2px solid #c9c9c9;border-radius:4px;box-sizing:border-box"></div>
<svg style="left:17px;top:143px" width="19" height="19" viewBox="0 0 19 19"><circle cx="9" cy="4" r="3" fill="#222"/><circle cx="5" cy="9" r="2" fill="#222"/><circle cx="13" cy="8" r="2.600" fill="#222"/><path d="M1 12l8 2 7-2-1 3-6 1-8-1ZM1 17h16v1.500H1Z" fill="#222"/></svg>
<div style="left:43px;top:142px;font-size:14px;line-height:20px;color:#666;white-space:nowrap;font-weight:700">土砂災害</div>
<div style="left:112px;top:142px;font-size:14px;line-height:20px;color:#777;white-space:nowrap">凡例</div>
<svg style="left:157px;top:145px" width="13" height="13" viewBox="0 0 13 13" stroke="#666" stroke-width="1"><path d="M1 1l11 11M12 1L1 12"/></svg>

<!-- legend panel -->
<div style="left:26px;top:193px;width:327px;height:92px;background:#f4f4f4;border:1.500px solid #111;box-sizing:border-box"></div>
<div style="left:50px;top:209px;width:68px;height:22px;background:#fbdba0"></div>
<div style="left:50px;top:246px;width:68px;height:22px;background:#f5a9c4"></div>
<div style="left:132.500px;top:210px;font-size:16px;line-height:24px;color:#333;letter-spacing:1.400px;white-space:nowrap">土砂災害警戒区域</div>
<div style="left:132.500px;top:247px;font-size:16px;line-height:24px;color:#333;letter-spacing:1.400px;white-space:nowrap">土砂災害特別警戒区域</div>

<!-- map controls -->
<div class="ctl" style="top:133px;height:37px;border-radius:4px 4px 0 0"></div>
<div class="ctl" style="top:169px;height:35px;border-radius:0 0 4px 4px"></div>
<div style="left:1553.500px;top:150px;width:13px;height:3px;background:#111"></div>
<div style="left:1558.500px;top:145px;width:3px;height:13px;background:#111"></div>
<div style="left:1553.500px;top:185px;width:13px;height:3px;background:#111"></div>
<div class="ctl" style="top:211px;height:37px"></div>
<div style="left:1549px;top:220px;width:22px;height:17px;border:2px solid #111;border-radius:3px;box-sizing:border-box;font-size:11px;font-weight:700;line-height:13px;text-align:center;color:#111;font-family:'Liberation Sans',sans-serif">3D</div>
<div class="ctl" style="top:254px;height:37px"></div>
<div style="left:1549px;top:262px;width:22px;height:22px;border:2px solid #111;border-radius:50%;box-sizing:border-box;font:700 14px/18px 'Liberation Serif',serif;text-align:center;color:#111">i</div>

<!-- bottom legend -->
<div class="dt" style="left:679px;background:#85bc22"></div>
<div class="lg" style="left:701px">選択中</div>
<div class="dt" style="left:750px;background:#c4161e"></div>
<div class="lg" style="left:772px">新着物件</div>
<div class="dt" style="left:833px;background:#e98b97"></div>
<div class="lg" style="left:855px">売出物件</div>

<!-- page frame -->
<div style="left:0;top:0;width:1600px;height:1px;background:#333"></div>
<div style="left:0;top:0;width:1px;height:1300px;background:#333"></div>
<div style="left:1599px;top:0;width:1px;height:1300px;background:#333"></div>
<div style="left:0;top:1299px;width:1600px;height:1px;background:#333"></div>
</div>
</body></html>
